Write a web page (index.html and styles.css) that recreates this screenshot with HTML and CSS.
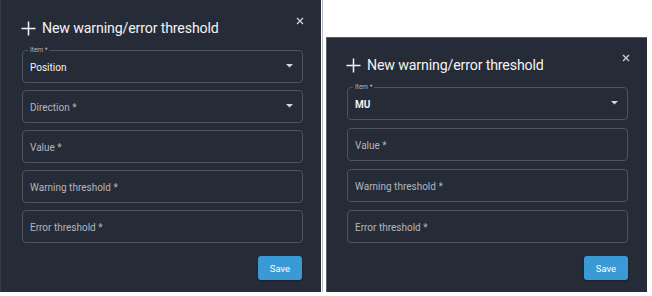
FILE: index.html
```html
<!DOCTYPE html>
<html lang="en">
<head>
    <meta charset="UTF-8">
    <meta name="viewport" content="width=device-width, initial-scale=1.0">
    <title>New warning/error threshold</title>
    <link rel="stylesheet" href="styles.css">
</head>
<body>
    <div class="dialog">
        <div class="dialog-header">
            <h2 class="dialog-title">
                <svg class="plus-icon" width="15" height="15" viewBox="0 0 15 15"><path d="M7.5 0.5v14M0.5 7.5h14" stroke="#f2f3f5" stroke-width="1.5" fill="none"/></svg>
                New warning/error threshold
            </h2>
            <button class="close-btn" aria-label="Close">
                <svg width="8" height="8" viewBox="0 0 8 8"><path d="M1 1l6 6M7 1l-6 6" stroke="#c9ccd2" stroke-width="1.4"/></svg>
            </button>
        </div>
        <div class="form">
            <div class="field field-select">
                <span class="field-legend">Item *</span>
                <span class="field-value">Position</span>
                <svg class="caret" width="7" height="4" viewBox="0 0 7 4"><path d="M0 0h7L3.5 3.5z" fill="#d5d7dc"/></svg>
            </div>
            <div class="field field-select">
                <span class="field-label">Direction *</span>
                <svg class="caret" width="7" height="4" viewBox="0 0 7 4"><path d="M0 0h7L3.5 3.5z" fill="#d5d7dc"/></svg>
            </div>
            <div class="field"><span class="field-label">Value *</span></div>
            <div class="field"><span class="field-label">Warning threshold *</span></div>
            <div class="field"><span class="field-label">Error threshold *</span></div>
        </div>
        <div class="dialog-actions">
            <button class="btn-save">Save</button>
        </div>
    </div>

    <div class="divider"></div>

    <div class="dialog dialog-short">
        <div class="dialog-header">
            <h2 class="dialog-title">
                <svg class="plus-icon" width="15" height="15" viewBox="0 0 15 15"><path d="M7.5 0.5v14M0.5 7.5h14" stroke="#f2f3f5" stroke-width="1.5" fill="none"/></svg>
                New warning/error threshold
            </h2>
            <button class="close-btn" aria-label="Close">
                <svg width="8" height="8" viewBox="0 0 8 8"><path d="M1 1l6 6M7 1l-6 6" stroke="#c9ccd2" stroke-width="1.4"/></svg>
            </button>
        </div>
        <div class="form">
            <div class="field field-select">
                <span class="field-legend">Item *</span>
                <span class="field-value field-value-bold">MU</span>
                <svg class="caret" width="7" height="4" viewBox="0 0 7 4"><path d="M0 0h7L3.5 3.5z" fill="#d5d7dc"/></svg>
            </div>
            <div class="field"><span class="field-label">Value *</span></div>
            <div class="field"><span class="field-label">Warning threshold *</span></div>
            <div class="field"><span class="field-label">Error threshold *</span></div>
        </div>
        <div class="dialog-actions">
            <button class="btn-save">Save</button>
        </div>
    </div>
</body>
</html>
```

FILE: styles.css
```css
:root {
    --panel-color: #262b38;
    --border-color: #4e535f;
    --label-color: #b3b6bd;
    --text-color: #f2f3f5;
    --primary-color: #3a9ad6;
}

body {
    font-family: 'Roboto', 'Liberation Sans', sans-serif;
    background-color: #fff;
    margin: 0;
    padding: 0;
    display: flex;
    align-items: flex-start;
    height: 296px;
    overflow: hidden;
}

.dialog {
    box-sizing: border-box;
    width: 321px;
    height: 292px;
    background-color: var(--panel-color);
    border-left: 1px solid #363b47;
    padding: 18px 19px 0 21px;
    display: flex;
    flex-direction: column;
}

.dialog-short {
    margin-top: 37px;
    height: 255px;
    border-top: 1px solid #5a5f6a;
    border-left: 1px solid #5a5f6a;
    padding: 17px 19px 0 20px;
}

.divider {
    width: 1px;
    height: 292px;
    margin: 0 3px 0 1px;
    background-color: #b9bcc1;
}

.dialog-header {
    display: flex;
    justify-content: space-between;
    align-items: flex-start;
    height: 20px;
    margin-bottom: 12px;
}

.dialog-title {
    display: flex;
    align-items: center;
    gap: 6px;
    margin: 0;
    font-size: 14.2px;
    font-weight: 400;
    line-height: 20px;
    color: var(--text-color);
    letter-spacing: -0.15px;
}

.plus-icon {
    margin-left: -1px;
}

.close-btn {
    background: none;
    border: none;
    padding: 0;
    margin: -2px -3px 0 0;
    width: 10px;
    height: 10px;
    display: flex;
    align-items: center;
    justify-content: center;
    cursor: pointer;
}

.form {
    display: flex;
    flex-direction: column;
    gap: 7px;
}

.dialog-short .form {
    gap: 8px;
}

.field {
    position: relative;
    box-sizing: border-box;
    width: 281px;
    height: 33px;
    border: 1px solid var(--border-color);
    border-radius: 4px;
    display: flex;
    align-items: center;
    padding: 1px 8px 0 7px;
}

.field-label {
    font-size: 10px;
    color: var(--label-color);
}

.field-value {
    font-size: 10px;
    color: var(--text-color);
    font-weight: 400;
}

.field-value-bold {
    font-weight: 700;
}

.field-legend {
    position: absolute;
    top: -5px;
    left: 5px;
    padding: 0 2px;
    font-size: 6.5px;
    line-height: 8px;
    color: var(--label-color);
    background-color: var(--panel-color);
}

.caret {
    margin-left: auto;
    margin-right: 1px;
    margin-top: -2px;
}

.dialog-actions {
    display: flex;
    justify-content: flex-end;
    margin-top: 13px;
}

.btn-save {
    width: 44px;
    height: 24px;
    border: none;
    border-radius: 3px;
    background-color: var(--primary-color);
    color: #fff;
    font-family: inherit;
    font-size: 9.5px;
    padding: 1px 0 0;
    box-shadow: 0 1px 2px rgba(0, 0, 0, 0.3);
}
```
